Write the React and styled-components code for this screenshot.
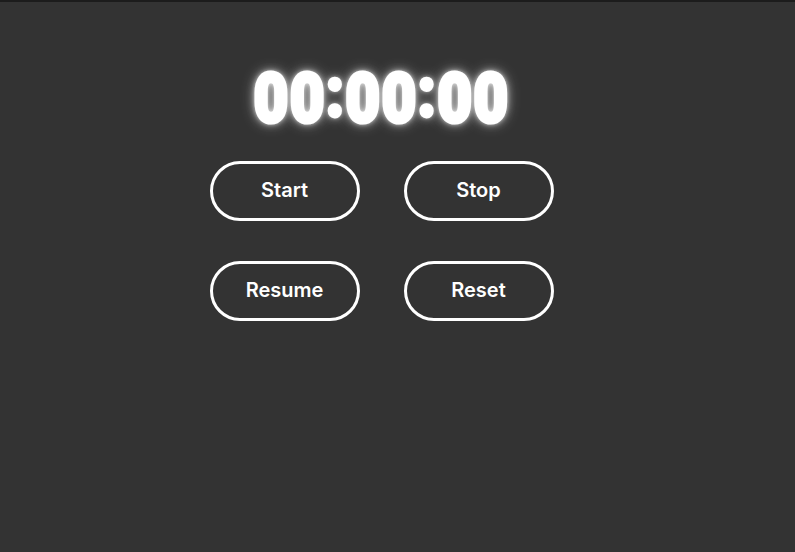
import React from "react";
import styled, { createGlobalStyle } from "styled-components";

const Global = createGlobalStyle`
  html, body {
    margin: 0;
    padding: 0;
    background: #333333;
    height: 100%;
  }
  #root { min-height: 100%; }
`;

const Page = styled.div`
  box-sizing: border-box;
  width: 795px;
  height: 552px;
  background: #333333;
  border-top: 2px solid #1c1c1c;
  display: flex;
  flex-direction: column;
  align-items: center;
  padding: 51px 32px 0 0;
`;

const Timer = styled.div`
  font-family: "Roboto", "Inter", sans-serif;
  font-weight: 900;
  font-size: 69px;
  line-height: 80px;
  height: 80px;
  color: #ffffff;
  white-space: nowrap;
  letter-spacing: 2px;
  transform: scaleX(0.86);
  -webkit-text-stroke: 4px #ffffff;
  text-shadow: 0 0 6px #ffffff, 0 0 10px rgba(255,255,255,0.8), 0 0 16px rgba(255,255,255,0.5);
`;

const Colon = styled.span`
  vertical-align: 6px;
`;

const Grid = styled.div`
  display: grid;
  grid-template-columns: 150px 150px;
  column-gap: 44px;
  row-gap: 40px;
  margin-top: 28px;
`;

const Button = styled.button`
  box-sizing: border-box;
  width: 150px;
  height: 60px;
  border: 3px solid #ffffff;
  border-radius: 30px;
  background: transparent;
  color: #ffffff;
  font-family: "Inter", "Noto Sans", sans-serif;
  font-weight: 600;
  font-size: 20px;
  cursor: pointer;
  padding: 0 0 2px;
`;

export default function App() {
  return (
    <>
      <Global />
      <Page>
        <Timer>
          00<Colon>:</Colon>00<Colon>:</Colon>00
        </Timer>
        <Grid>
          <Button>Start</Button>
          <Button>Stop</Button>
          <Button>Resume</Button>
          <Button>Reset</Button>
        </Grid>
      </Page>
    </>
  );
}
